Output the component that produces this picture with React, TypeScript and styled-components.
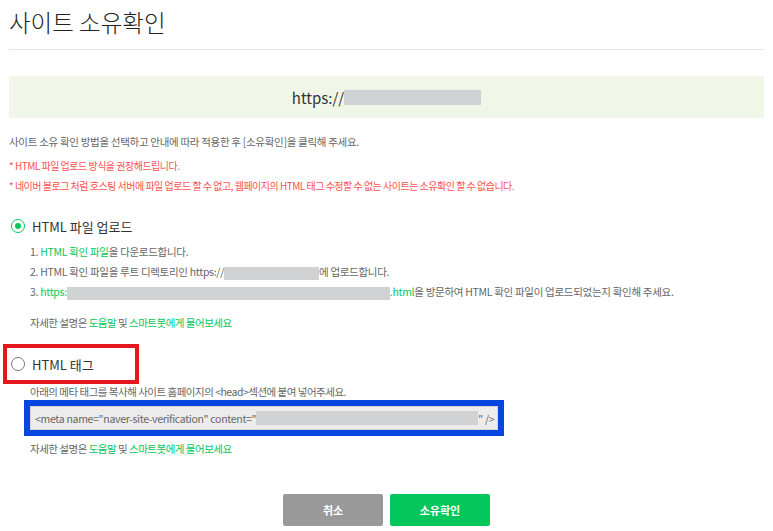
import React from "react";
import styled, { createGlobalStyle } from "styled-components";

const GlobalStyle = createGlobalStyle`
  html, body {
    margin: 0;
    padding: 0;
    background: #fff;
  }
  body {
    font-family: "Noto Sans CJK KR", "Noto Sans", sans-serif;
    color: #666;
  }
`;

const Page = styled.div`
  width: 755px;
  padding: 0 9px;
`;

const Title = styled.h2`
  margin: 0;
  padding: 4px 0 9px;
  font-size: 23.5px;
  line-height: 36px;
  font-weight: 300;
  color: #222;
  border-bottom: 1px solid #e3e3e3;
`;

const UrlBox = styled.div`
  margin-top: 26px;
  height: 42px;
  background: #f0f6e8;
  display: flex;
  align-items: center;
  justify-content: center;
  font-size: 15px;
  color: #333;
`;

const Masked = styled.span<{ w: number; h?: number }>`
  display: inline-block;
  width: ${(p) => p.w}px;
  height: ${(p) => p.h || 13}px;
  background: #d1d2d4;
  vertical-align: middle;
`;

const Text = styled.p<{ mt: number; tight?: boolean }>`
  margin: ${(p) => p.mt}px 0 0;
  font-size: 10.5px;
  line-height: 20px;
  letter-spacing: ${(p) => (p.tight ? -0.5 : -0.3)}px;
  color: #666;
`;

const Notice = styled.ul`
  list-style: none;
  margin: 4px 0 0;
  padding: 0;
  font-size: 10px;
  line-height: 20px;
  letter-spacing: -0.5px;
  color: #ff5050;
`;

const Option = styled.label<{ mt: number; marked?: boolean }>`
  display: flex;
  align-items: center;
  gap: 7px;
  margin-top: ${(p) => p.mt}px;
  height: ${(p) => (p.marked ? 32 : 20)}px;
  width: ${(p) => (p.marked ? "124px" : "auto")};
  padding-left: ${(p) => (p.marked ? 4 : 2)}px;
  margin-left: ${(p) => (p.marked ? -2 : 0)}px;
  outline: ${(p) => (p.marked ? "4px solid #e3171d" : "none")};
  font-size: 13px;
  color: #333;
`;

const Radio = styled.span<{ checked?: boolean }>`
  box-sizing: border-box;
  width: 14px;
  height: 14px;
  border-radius: 50%;
  border: 1.5px solid ${(p) => (p.checked ? "#03c75a" : "#777")};
  display: flex;
  align-items: center;
  justify-content: center;
  &::after {
    content: "";
    width: 6px;
    height: 6px;
    border-radius: 50%;
    background: ${(p) => (p.checked ? "#03c75a" : "transparent")};
  }
`;

const Steps = styled.ol`
  list-style: none;
  margin: 6px 0 0;
  padding: 0 0 0 21px;
  font-size: 10.5px;
  line-height: 20px;
  letter-spacing: -0.3px;
  color: #666;
`;

const Indent = styled.div`
  padding-left: 21px;
`;

const Link = styled.span`
  color: #03c75a;
`;

const Field = styled.div`
  margin-top: 4px;
  margin-left: 21px;
  box-sizing: border-box;
  width: 468px;
  height: 24px;
  display: flex;
  align-items: center;
  padding-left: 4px;
  background: #ececec;
  border: 1px solid #d6d6d6;
  outline: 6px solid #0745e0;
  font-size: 10.5px;
  letter-spacing: -0.3px;
  color: #666;
  white-space: nowrap;
`;

const Buttons = styled.div`
  margin-top: 35px;
  display: flex;
  justify-content: center;
  gap: 7px;
`;

const Button = styled.button<{ primary?: boolean }>`
  width: 100px;
  height: 32px;
  border: none;
  border-radius: 2px;
  background: ${(p) => (p.primary ? "#03c75a" : "#999")};
  color: #fff;
  font-family: inherit;
  font-size: 11px;
  font-weight: 700;
`;

const Help = () => (
  <>
    자세한 설명은 <Link>도움말</Link> 및 <Link>스마트봇에게 물어보세요</Link>
  </>
);

export default function App() {
  return (
    <Page>
      <GlobalStyle />
      <Title>사이트 소유확인</Title>
      <UrlBox>
        https://
        <Masked w={137} h={15} />
      </UrlBox>
      <Text mt={14}>
        사이트 소유 확인 방법을 선택하고 안내에 따라 적용한 후 [소유확인]을 클릭해 주세요.
      </Text>
      <Notice>
        <li>* HTML 파일 업로드 방식을 권장해드립니다.</li>
        <li>
          * 네이버 블로그 처럼 호스팅 서버에 파일 업로드 할 수 없고, 웹페이지의 HTML 태그 수정할 수 없는 사이트는
          소유확인 할 수 없습니다.
        </li>
      </Notice>

      <Option mt={20}>
        <Radio checked />
        HTML 파일 업로드
      </Option>
      <Steps>
        <li>
          1. <Link>HTML 확인 파일</Link>을 다운로드합니다.
        </li>
        <li>
          2. HTML 확인 파일을 루트 디렉토리인 https://
          <Masked w={95} />에 업로드합니다.
        </li>
        <li>
          3. <Link>https:</Link>
          <Masked w={323} />
          <Link>.html</Link>을 방문하여 HTML 확인 파일이 업로드되었는지 확인해 주세요.
        </li>
      </Steps>
      <Indent>
        <Text mt={11} tight>
          <Help />
        </Text>
      </Indent>

      <Option mt={15} marked>
        <Radio />
        HTML 태그
      </Option>
      <Indent>
        <Text mt={2} tight>
          아래의 메타 태그를 복사해 사이트 홈페이지의 &lt;head&gt;섹션에 붙여 넣어주세요.
        </Text>
      </Indent>
      <Field>
        &lt;meta name="naver-site-verification" content="
        <Masked w={222} h={14} />" /&gt;
      </Field>
      <Indent>
        <Text mt={9} tight>
          <Help />
        </Text>
      </Indent>

      <Buttons>
        <Button>취소</Button>
        <Button primary>소유확인</Button>
      </Buttons>
    </Page>
  );
}
